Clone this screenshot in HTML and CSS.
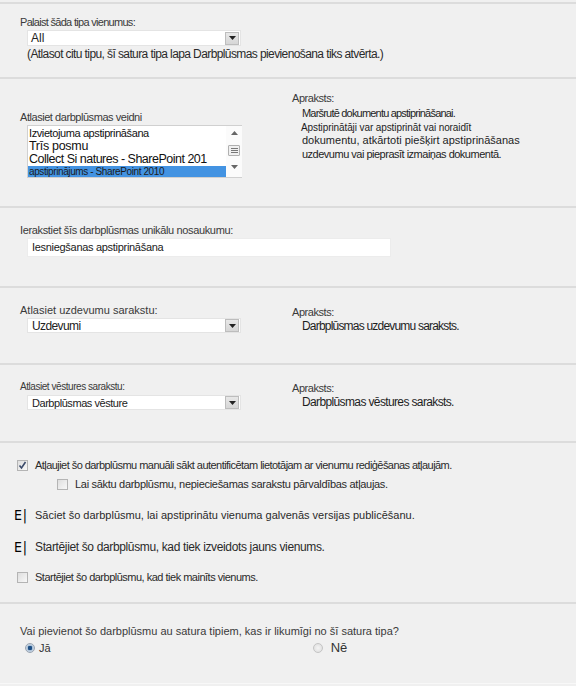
FILE: index.html
```html
<!DOCTYPE html>
<html lang="lv">
<head>
<meta charset="utf-8">
<title>Darbplūsmas pievienošana</title>
<link rel="stylesheet" href="styles.css">
</head>
<body>
<div class="page">
  <section class="sec s1">
    <div class="label ls7">Palaist šāda tipa vienumus:</div>
    <div class="select w-sel">
      <span class="val">All</span>
      <span class="arrow"><svg width="7" height="4" viewBox="0 0 7 4"><path d="M0 0h7L3.5 4z" fill="#222"/></svg></span>
    </div>
    <div class="note">(Atlasot citu tipu, šī satura tipa lapa Darbplūsmas pievienošana tiks atvērta.)</div>
  </section>

  <section class="sec two s2">
    <div class="col-left">
      <div class="label ls4">Atlasiet darbplūsmas veidni</div>
      <div class="listbox">
        <div class="items">
          <div class="item i1">Izvietojuma apstiprināšana</div>
          <div class="item i2">Trīs posmu</div>
          <div class="item i3">Collect Si natures - SharePoint 201</div>
          <div class="item sel">apstiprinājums - SharePoint 2010</div>
        </div>
        <div class="scroll">
          <svg width="7" height="4" viewBox="0 0 7 4"><path d="M0 4h7L3.5 0z" fill="#666"/></svg>
          <span class="thumb"><svg width="7" height="5" viewBox="0 0 7 5"><path d="M0 .5h7M0 2.5h7M0 4.5h7" stroke="#777" stroke-width="1"/></svg></span>
          <svg width="7" height="4" viewBox="0 0 7 4"><path d="M0 0h7L3.5 4z" fill="#666"/></svg>
        </div>
      </div>
    </div>
    <div class="col-right">
      <div class="dlabel">Apraksts:</div>
      <div class="desc">
        <div class="d1">Maršrutē dokumentu apstiprināšanai.</div>
        <div class="d2">Apstiprinātāji var apstiprināt vai noraidīt</div>
        <div class="d3">dokumentu, atkārtoti piešķirt apstiprināšanas</div>
        <div class="d4">uzdevumu vai pieprasīt izmaiņas dokumentā.</div>
      </div>
    </div>
  </section>

  <section class="sec s3">
    <div class="label ls3">Ierakstiet šīs darbplūsmas unikālu nosaukumu:</div>
    <div class="input">Iesniegšanas apstiprināšana</div>
  </section>

  <section class="sec two s4">
    <div class="col-left">
      <div class="label lbig">Atlasiet uzdevumu sarakstu:</div>
      <div class="select w-sel">
        <span class="val v-uzd">Uzdevumi</span>
        <span class="arrow"><svg width="7" height="4" viewBox="0 0 7 4"><path d="M0 0h7L3.5 4z" fill="#222"/></svg></span>
      </div>
    </div>
    <div class="col-right">
      <div class="dlabel">Apraksts:</div>
      <div class="desc big"><div class="dd1">Darbplūsmas uzdevumu saraksts.</div></div>
    </div>
  </section>

  <section class="sec two s5">
    <div class="col-left">
      <div class="label lsmall">Atlasiet vēstures sarakstu:</div>
      <div class="select w-sel">
        <span class="val v-vest">Darbplūsmas vēsture</span>
        <span class="arrow"><svg width="7" height="4" viewBox="0 0 7 4"><path d="M0 0h7L3.5 4z" fill="#222"/></svg></span>
      </div>
    </div>
    <div class="col-right">
      <div class="dlabel">Apraksts:</div>
      <div class="desc big"><div class="dd2">Darbplūsmas vēstures saraksts.</div></div>
    </div>
  </section>

  <section class="sec s6">
    <div class="opt r1">
      <span class="cb checked"><svg width="9" height="9" viewBox="0 0 9 9"><path d="M1.5 4.5l2 2.5 4-6" fill="none" stroke="#3a4a6a" stroke-width="1.6"/></svg></span>
      <span class="otext">Atļaujiet šo darbplūsmu manuāli sākt autentificētam lietotājam ar vienumu rediģēšanas atļaujām.</span>
    </div>
    <div class="opt r2">
      <span class="cb"></span>
      <span class="otext">Lai sāktu darbplūsmu, nepieciešamas sarakstu pārvaldības atļaujas.</span>
    </div>
    <div class="opt r3">
      <span class="ei">E|</span>
      <span class="otext">Sāciet šo darbplūsmu, lai apstiprinātu vienuma galvenās versijas publicēšanu.</span>
    </div>
    <div class="opt r4">
      <span class="ei">E|</span>
      <span class="otext big">Startējiet šo darbplūsmu, kad tiek izveidots jauns vienums.</span>
    </div>
    <div class="opt r5">
      <span class="cb"></span>
      <span class="otext">Startējiet šo darbplūsmu, kad tiek mainīts vienums.</span>
    </div>
  </section>

  <section class="sec s7">
    <div class="label">Vai pievienot šo darbplūsmu au satura tipiem, kas ir likumīgi no šī satura tipa?</div>
    <div class="radios">
      <span class="radio-opt yes"><span class="rb on"></span><span class="rtext">Jā</span></span>
      <span class="radio-opt no"><span class="rb"></span><span class="rtext big">Nē</span></span>
    </div>
  </section>
  <div class="end"></div>
</div>
</body>
</html>
```

FILE: styles.css
```css
html, body {
  margin: 0;
  padding: 0;
  background: #f0f0f0;
}
body {
  font-family: "Liberation Sans", Arial, sans-serif;
  font-size: 11px;
  color: #333;
}
.page {
  padding-top: 2px;
}
.sec {
  box-sizing: border-box;
  border-top: 2px solid #dcdcdc;
  padding-left: 20px;
}
.two {
  display: flex;
}
.col-left {
  width: 272px;
  flex: none;
}
.col-right {
  flex: 1;
}
.label, .dlabel {
  line-height: 14px;
  color: #3a3a3a;
  white-space: nowrap;
}
.ls7 { letter-spacing: -0.7px; }
.ls4 { letter-spacing: -0.45px; }
.ls3 { letter-spacing: -0.35px; }
.lsmall { font-size: 10px; letter-spacing: -0.45px; }
.dlabel { letter-spacing: -0.45px; }

.s1 { height: 75px; padding-top: 11px; }
.s2 { height: 129px; }
.s3 { height: 80px; padding-top: 15px; }
.s4 { height: 77px; }
.s5 { height: 78px; }
.s6 { height: 161px; padding-top: 15px; }
.s7 { height: 81px; padding-top: 20px; }
.end {
  height: 3px;
  border-top: 1px solid #f8f8f8;
  border-bottom: 2px solid #c9c9c9;
}

/* select */
.select {
  margin: 1px 0 0 7px;
  width: 214px;
  height: 16px;
  box-sizing: border-box;
  background: #fff;
  border: 1px solid #e4e4e4;
  display: flex;
  align-items: center;
  justify-content: space-between;
}
.select .val {
  padding-left: 3px;
  font-size: 12px;
  color: #222;
  line-height: 14px;
  white-space: nowrap;
}
.select .v-uzd { letter-spacing: -0.6px; padding-left: 4px; }
.select .v-vest { font-size: 11px; letter-spacing: -0.45px; padding-left: 4px; }
.select .arrow {
  width: 14px;
  height: 13px;
  margin-right: 1px;
  box-sizing: border-box;
  background: linear-gradient(#e8e8e8, #d6d6d6);
  border: 1px solid #bdbdbd;
  display: flex;
  align-items: center;
  justify-content: center;
}
.note {
  margin: 1px 0 0 7px;
  font-size: 12px;
  letter-spacing: -0.6px;
  line-height: 14px;
  color: #2a2a2a;
  white-space: nowrap;
}

/* template section */
.s2 .col-left { padding-top: 31px; }
.s2 .col-right { padding-top: 12px; }
.listbox {
  margin: 1px 0 0 7px;
  width: 215px;
  height: 53px;
  box-sizing: border-box;
  background: #fff;
  border: 1px solid #d0d0d0;
  border-right: none;
  display: flex;
}
.items {
  flex: 1;
  min-width: 0;
  padding-top: 1px;
  overflow: hidden;
}
.item {
  padding-left: 1px;
  white-space: nowrap;
  color: #111;
}
.i1 { font-size: 11px; line-height: 13px; letter-spacing: -0.4px; }
.i2 { font-size: 12.5px; line-height: 13px; letter-spacing: -0.3px; }
.i3 { font-size: 12.5px; line-height: 13px; letter-spacing: -0.5px; }
.sel {
  font-size: 10px;
  line-height: 12px;
  letter-spacing: -0.4px;
  background: #4393e2;
  color: #1b1b1b;
}
.scroll {
  width: 16px;
  flex: none;
  background: #fbfbfb;
  display: flex;
  flex-direction: column;
  align-items: center;
  justify-content: space-between;
  padding: 5px 0 8px;
  box-sizing: border-box;
}
.thumb {
  width: 10px;
  height: 9px;
  border: 1px solid #b0b0b0;
  border-radius: 1px;
  background: #f0f0f0;
  display: flex;
  align-items: center;
  justify-content: center;
}
.desc {
  margin-top: 2px;
  padding-left: 10px;
  line-height: 13.7px;
  color: #1e1e1e;
  white-space: nowrap;
}
.d1 { letter-spacing: -0.8px; }
.d2 { font-size: 10px; margin-left: -1px; letter-spacing: -0.1px; }
.d4 { letter-spacing: -0.5px; }
.desc.big { font-size: 12px; margin-top: 0; line-height: 14px; }
.dd1 { letter-spacing: -0.8px; }
.dd2 { letter-spacing: -0.63px; }

/* name section */
.input {
  margin: 1px 0 0 7px;
  width: 364px;
  height: 19px;
  box-sizing: border-box;
  background: #fff;
  border: 1px solid #ececec;
  padding-left: 4px;
  line-height: 17px;
  color: #1a1a1a;
  letter-spacing: -0.3px;
}

/* list sections */
.s4 .col-left { padding-top: 15px; }
.s4 .col-right { padding-top: 17px; }
.s5 .col-left { padding-top: 15px; }
.s5 .col-right { padding-top: 16px; }
.s4 .select, .s5 .select { height: 15px; }

/* options */
.opt {
  display: flex;
  align-items: center;
  height: 14px;
}
.otext {
  line-height: 14px;
  color: #2a2a2a;
  white-space: nowrap;
}
.otext.big { font-size: 12px; }
.r1 { margin-left: -3px; }
.r1 .otext { letter-spacing: -0.55px; }
.r2 { margin-left: 37px; margin-top: 5px; }
.r2 .otext { letter-spacing: -0.3px; }
.r3 { margin-left: -6px; margin-top: 17px; }
.r4 { margin-left: -6px; margin-top: 18px; }
.r4 .otext { letter-spacing: -0.36px; }
.r5 { margin-left: -3px; margin-top: 16px; }
.r5 .otext { letter-spacing: -0.5px; }
.cb {
  width: 11px;
  height: 11px;
  box-sizing: border-box;
  border: 1px solid #b4b4b4;
  background: linear-gradient(135deg, #dedede, #f8f8f8);
  margin-right: 7px;
  flex: none;
  display: flex;
  align-items: center;
  justify-content: center;
}
.ei {
  font-size: 14px;
  font-family: "DejaVu Sans", sans-serif;
  font-weight: normal;
  color: #000;
  width: 21px;
  flex: none;
  line-height: 14px;
  letter-spacing: 1px;
  transform: scaleX(0.9);
  transform-origin: left center;
}

/* radios */
.radios {
  display: flex;
  margin-top: 3px;
  padding-left: 5px;
}
.radio-opt {
  display: flex;
  align-items: center;
}
.radio-opt.no { margin-left: 262px; }
.rb {
  width: 10px;
  height: 10px;
  box-sizing: border-box;
  border-radius: 50%;
  border: 1px solid #c4c4c4;
  background: radial-gradient(#f4f4f4, #dcdcdc);
  margin-right: 4px;
}
.no .rb { margin-right: 8px; }
.rb.on {
  border-color: #9aa4b0;
  background: radial-gradient(circle, #1d4f85 0 2px, #a9bfd6 2.5px, #dfe6ee 5px);
}
.rtext { color: #333; line-height: 14px; }
.rtext.big { font-size: 13px; }
```
